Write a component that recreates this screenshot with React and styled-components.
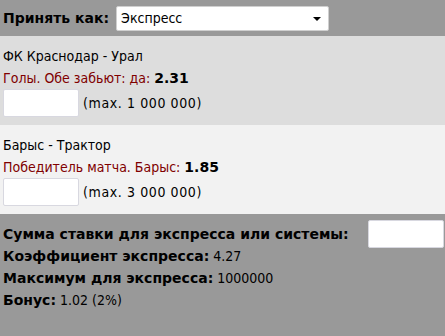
import React from "react"
import styled, { createGlobalStyle } from "styled-components"

const GlobalStyle = createGlobalStyle`
  html, body {
    margin: 0;
    padding: 0;
    background: #999999;
  }
  body {
    font-family: "DejaVu Sans Condensed", "DejaVu Sans", sans-serif;
    font-size: 14px;
    color: #000;
  }
`

const bets = [
    { match: "ФК Краснодар - Урал", market: "Голы. Обе забьют: да:", odds: "2.31", max: "1 000 000", bg: "#dddddd" },
    { match: "Барыс - Трактор", market: "Победитель матча. Барыс:", odds: "1.85", max: "3 000 000", bg: "#f2f2f2" },
]

export default function App() {
    return (
        <>
            <GlobalStyle />
            <Container>
                <Header>
                    <Label>Принять как:</Label>
                    <SelectWrap>
                        <Select defaultValue="express">
                            <option value="single">Ординар</option>
                            <option value="express">Экспресс</option>
                            <option value="system">Система</option>
                        </Select>
                        <Arrow />
                    </SelectWrap>
                </Header>

                {bets.map((b) => (
                    <Bet key={b.match} $bg={b.bg}>
                        <Line>{b.match}</Line>
                        <Line>
                            <Market>{b.market}</Market> <Label>{b.odds}</Label>
                        </Line>
                        <StakeRow>
                            <Input type="text" />
                            <Max>(max. {b.max})</Max>
                        </StakeRow>
                    </Bet>
                ))}

                <Summary>
                    <SumRow>
                        <Label>Сумма ставки для экспресса или системы:</Label>
                        <Input type="text" />
                    </SumRow>
                    <Line><Label>Коэффициент экспресса:</Label> 4.27</Line>
                    <Line><Label>Максимум для экспресса:</Label> 1000000</Line>
                    <Line><Label>Бонус:</Label> 1.02 (2%)</Line>
                </Summary>
            </Container>
        </>
    )
}

const Container = styled.div`
  width: 445px;
  min-height: 336px;
  background: #999999;
  display: flex;
  flex-direction: column;
`

const Header = styled.div`
  height: 36px;
  display: flex;
  align-items: center;
  gap: 7px;
  padding: 0 3px;
  box-sizing: border-box;
`

const Label = styled.b`
  font-family: "DejaVu Sans", sans-serif;
  font-weight: bold;
  white-space: nowrap;
`

const SelectWrap = styled.div`
  position: relative;
  width: 213px;
  height: 25px;
`

const Select = styled.select`
  appearance: none;
  width: 100%;
  height: 100%;
  margin: 0;
  padding: 0 4px;
  background: #fff;
  border: 1px solid #cfcfcf;
  border-radius: 2px;
  font-family: inherit;
  font-size: 14px;
  color: #000;
  outline: none;
`

const Arrow = styled.span`
  position: absolute;
  right: 8px;
  top: 11px;
  width: 0;
  height: 0;
  border-left: 4px solid transparent;
  border-right: 4px solid transparent;
  border-top: 4px solid #000;
  pointer-events: none;
`

const Bet = styled.div`
  background: ${(p) => p.$bg};
  padding: 9px 3px 8px;
`

const Line = styled.div`
  line-height: 22px;
  white-space: nowrap;
`

const Market = styled.span`
  color: #800000;
`

const StakeRow = styled.div`
  display: flex;
  align-items: center;
  gap: 4px;
  height: 28px;
`

const Max = styled.span`
  letter-spacing: 0.6px;
`

const Input = styled.input`
  width: 76px;
  height: 28px;
  box-sizing: border-box;
  margin: 0;
  border: 1px solid #d8d8e0;
  border-radius: 2px;
  background: #fff;
  font-family: inherit;
  font-size: 14px;
  outline: none;
`

const Summary = styled.div`
  flex: 1;
  padding: 9px 1px 6px 3px;
  display: flex;
  flex-direction: column;
`

const SumRow = styled.div`
  display: flex;
  align-items: center;
  justify-content: space-between;
  height: 22px;
  line-height: 22px;
`
